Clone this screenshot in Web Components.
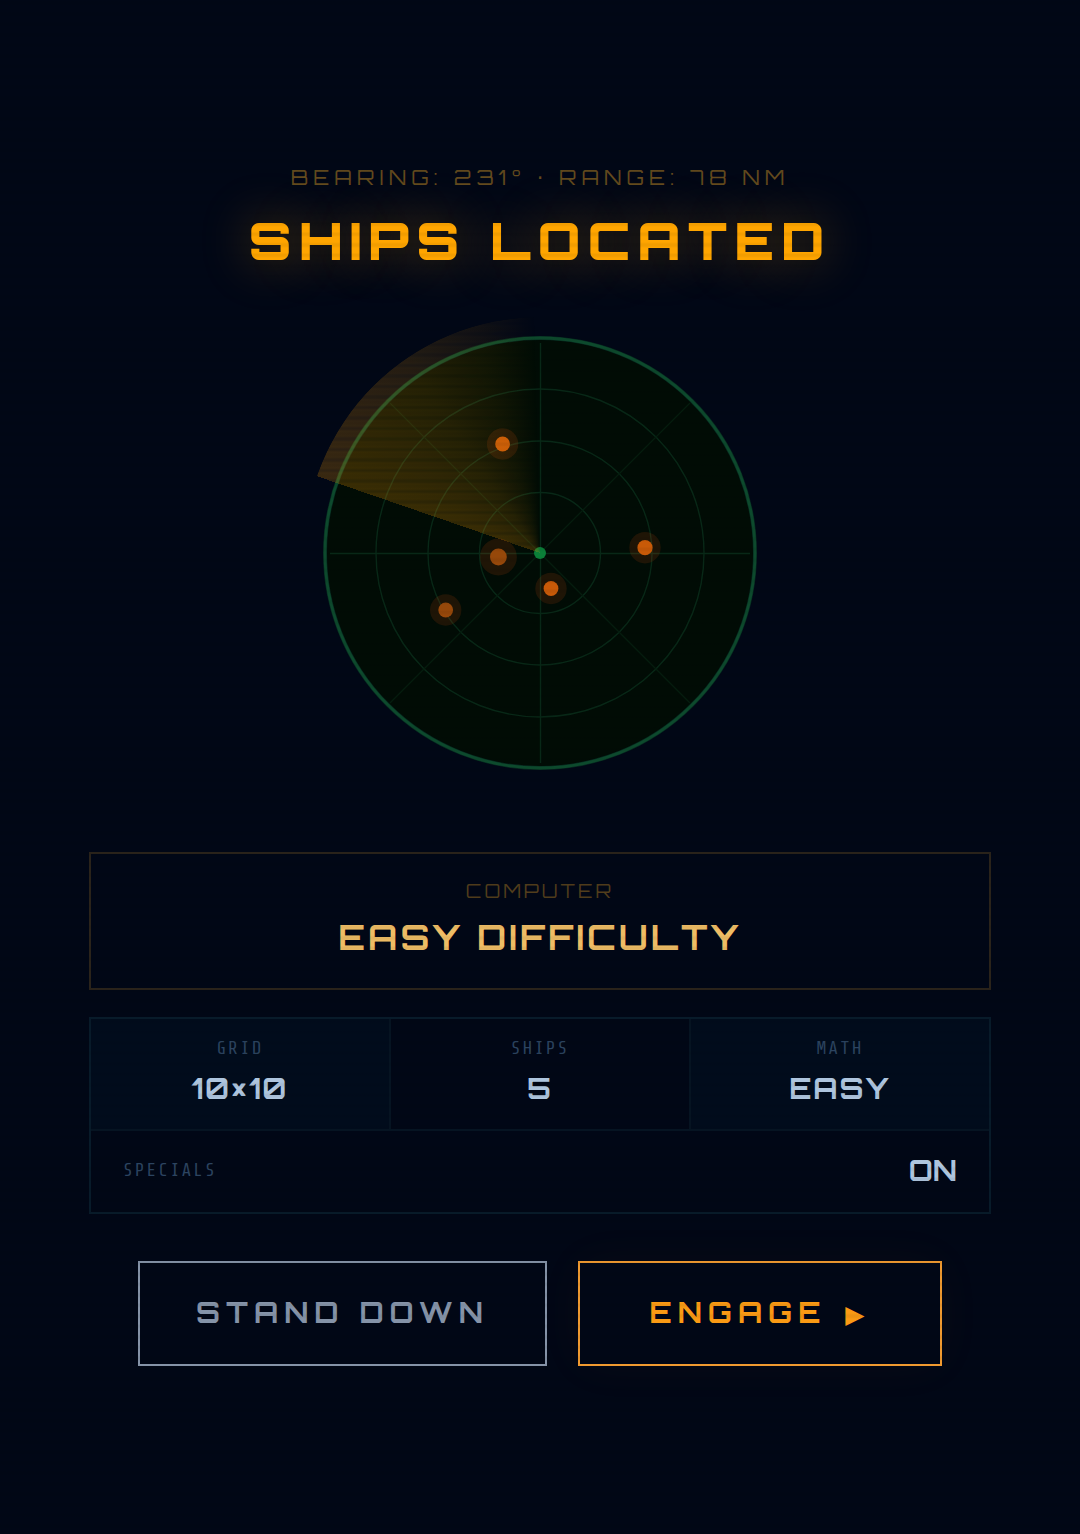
<!DOCTYPE html>
<html lang="en">
<head>
<meta charset="utf-8">
<meta name="viewport" content="width=device-width, initial-scale=1">
<title>Ships Located</title>
<style>
  html { background: #010716; }
  body {
    margin: 0;
    font-family: Orbitron, "DejaVu Sans", sans-serif;
    --display: Orbitron, "DejaVu Sans", sans-serif;
    --mono: "Share Tech Mono", "DejaVu Sans Mono", monospace;
    --night: #010716;
    --amber: #ffa500;
    --steel: #aec5de;
    --line: #081b2a;
  }
</style>
</head>
<body>
<briefing-screen>
  <status-heading slot="heading">
    <span slot="bearing">BEARING: 231° · RANGE: 78 NM</span>
    <span slot="title">SHIPS LOCATED</span>
  </status-heading>
  <radar-scope slot="radar"></radar-scope>
  <opponent-card>
    <span slot="kind">COMPUTER</span>
    <span slot="level">EASY DIFFICULTY</span>
  </opponent-card>
  <mission-specs>
    <spec-cell tinted><span slot="label">GRID</span>10×10</spec-cell>
    <spec-cell><span slot="label">SHIPS</span>5</spec-cell>
    <spec-cell tinted><span slot="label">MATH</span>EASY</spec-cell>
    <spec-cell wide><span slot="label">SPECIALS</span>ON</spec-cell>
  </mission-specs>
  <action-button slot="actions" class="stand">STAND DOWN</action-button>
  <action-button slot="actions" class="engage" primary>ENGAGE <span slot="arrow">▶</span></action-button>
</briefing-screen>

<script>
const define = (name, html) => {
  const template = document.createElement('template');
  template.innerHTML = html;
  customElements.define(name, class extends HTMLElement {
    constructor() {
      super();
      this.attachShadow({ mode: 'open' }).append(template.content.cloneNode(true));
    }
  });
};

define('briefing-screen', `
  <style>
    :host {
      display: flex; flex-direction: column; align-items: center; justify-content: center;
      min-height: 100vh; box-sizing: border-box; padding: 32px 89px 34px;
      background: var(--night); position: relative;
    }
    main { width: 100%; max-width: 902px; display: flex; flex-direction: column; }
    .radar { margin: 44px 0 63px; display: flex; justify-content: center; }
    .panels { display: flex; flex-direction: column; gap: 27px; }
    .actions {
      display: flex; gap: 31px; margin-top: 47px; align-self: center;
      width: 100%; max-width: 804px;
    }
    ::slotted(.stand) { flex: 409 1 0; }
    ::slotted(.engage) { flex: 364 1 0; }
    /* CRT scan lines over the whole screen */
    .scan {
      position: absolute; inset: 0; pointer-events: none;
      background: repeating-linear-gradient(to bottom,
        transparent 0 1px, rgba(0,0,0,.05) 2px 4px, transparent 6px 11px,
        rgba(0,0,0,.05) 13px 15px, transparent 17px 21px);
    }
  </style>
  <main>
    <slot name="heading"></slot>
    <div class="radar"><slot name="radar"></slot></div>
    <div class="panels"><slot></slot></div>
    <div class="actions"><slot name="actions"></slot></div>
  </main>
  <div class="scan"></div>`);

define('status-heading', `
  <style>
    :host { display: flex; flex-direction: column; align-items: center; gap: 20px; text-align: center; }
    p, h1 { margin: 0; font-family: var(--display); }
    p { font-size: 21px; line-height: 20px; letter-spacing: 5px; color: #644b1e; }
    h1 {
      font-size: 52px; line-height: 66px; font-weight: 900; letter-spacing: 7px; color: var(--amber);
      text-shadow: 0 0 50px rgba(255,165,0,.4);
    }
  </style>
  <p><slot name="bearing"></slot></p>
  <h1><slot name="title"></slot></h1>`);

define('radar-scope', `
  <style>
    :host { display: grid; width: 472px; max-width: 100%; aspect-ratio: 1; }
    svg, .sweep { grid-area: 1 / 1; width: 100%; height: 100%; display: block; }
    .sweep {
      border-radius: 50%;
      background: conic-gradient(from 289deg, rgba(255,160,5,.23), rgba(255,160,5,.15) 36deg, rgba(255,160,5,.07) 56deg, transparent 70deg);
      mask-image: repeating-linear-gradient(to bottom,
        #000 0 4px, rgba(0,0,0,.8) 6px 7px, #000 9px 14px, rgba(0,0,0,.8) 16px 18px, #000 20px 21px);
    }
    .halo { fill: #ff5a10; fill-opacity: .12; }
    .hot { fill: #c85a08; }
    .cool { fill: #96480a; }
  </style>
  <svg viewBox="-236 -236 472 472" role="img" aria-label="Radar scope with five contacts">
    <circle r="215" fill="#010c05" stroke="#072a20" stroke-width="4"/>
    <circle r="215" fill="none" stroke="#0d4a2d" stroke-width="2.8"/>
    <g fill="none" stroke="#082817" stroke-width="1.4">
      <circle r="60.5"/><circle r="112"/><circle r="164"/>
      <path d="M-210 .5H210M.5-210V210"/>
      <path d="M-150-150 150 150M150-150-150 150" stroke="#051c0e"/>
    </g>
    <circle r="6" fill="#0b7f38"/>
    <g class="halo">
      <circle cx="-37.4" cy="-109" r="15.7"/><circle cx="105" cy="-5.3" r="15.7"/>
      <circle cx="11" cy="35.5" r="15.7"/><circle cx="-94.3" cy="57" r="15.7"/>
      <circle cx="-41.6" cy="4" r="18.5"/>
    </g>
    <circle class="hot" cx="-37.4" cy="-109" r="7.4"/>
    <circle class="hot" cx="105" cy="-5.3" r="7.6"/>
    <circle class="hot" cx="11" cy="35.5" r="7.4"/>
    <circle class="cool" cx="-94.3" cy="57" r="7.4"/>
    <circle class="cool" cx="-41.6" cy="4" r="8.4"/>
  </svg>
  <div class="sweep"></div>`);

define('opponent-card', `
  <style>
    :host {
      display: flex; flex-direction: column; align-items: center; gap: 10px;
      border: 2px solid #2b241b; padding: 25px 20px 27px; text-align: center;
      font-family: var(--display);
    }
    p, h2 { margin: 0; }
    p { font-size: 19px; line-height: 24px; letter-spacing: 3px; color: #523e1c; }
    h2 { font-size: 35px; line-height: 48px; font-weight: 700; letter-spacing: 3px; color: #efbd65; }
  </style>
  <p><slot name="kind"></slot></p>
  <h2><slot name="level"></slot></h2>`);

define('mission-specs', `
  <style>
    :host {
      display: grid; grid-template-columns: repeat(3, 1fr); gap: 2px;
      border: 2px solid var(--line); background: #061422;
    }
  </style>
  <slot></slot>`);

define('spec-cell', `
  <style>
    :host {
      display: flex; flex-direction: column; align-items: center; gap: 8px;
      background: var(--night); padding: 17px 16px 20px;
    }
    :host([tinted]) { background: #010c1c; }
    :host([wide]) {
      grid-column: 1 / -1; flex-direction: row; justify-content: space-between;
      padding: 19px 32px 21px;
    }
    .label { font: 18px/24px var(--mono); letter-spacing: 2px; color: #2c4460; }
    .value { font: 700 29px/41px var(--display); letter-spacing: 2px; color: var(--steel); }
    :host([wide]) .value { letter-spacing: 0; }
  </style>
  <span class="label"><slot name="label"></slot></span>
  <span class="value"><slot></slot></span>`);

define('action-button', `
  <style>
    :host { display: flex; min-width: 0; }
    button {
      flex: 1; padding: 29px 16px 31px; border: 2px solid #8593a8; border-radius: 0; background: transparent;
      font: 700 29px/41px var(--display); letter-spacing: 6px; color: #8593a8;
      white-space: nowrap; cursor: pointer;
    }
    ::slotted([slot="arrow"]) { font-size: 25px; line-height: 1; margin-left: 4px; }
    :host([primary]) button {
      border-color: #f09a30; color: #fa9a14;
      box-shadow: 0 0 50px rgba(255,165,0,.04);
    }
  </style>
  <button type="button"><slot></slot><slot name="arrow"></slot></button>`);
</script>
</body>
</html>
